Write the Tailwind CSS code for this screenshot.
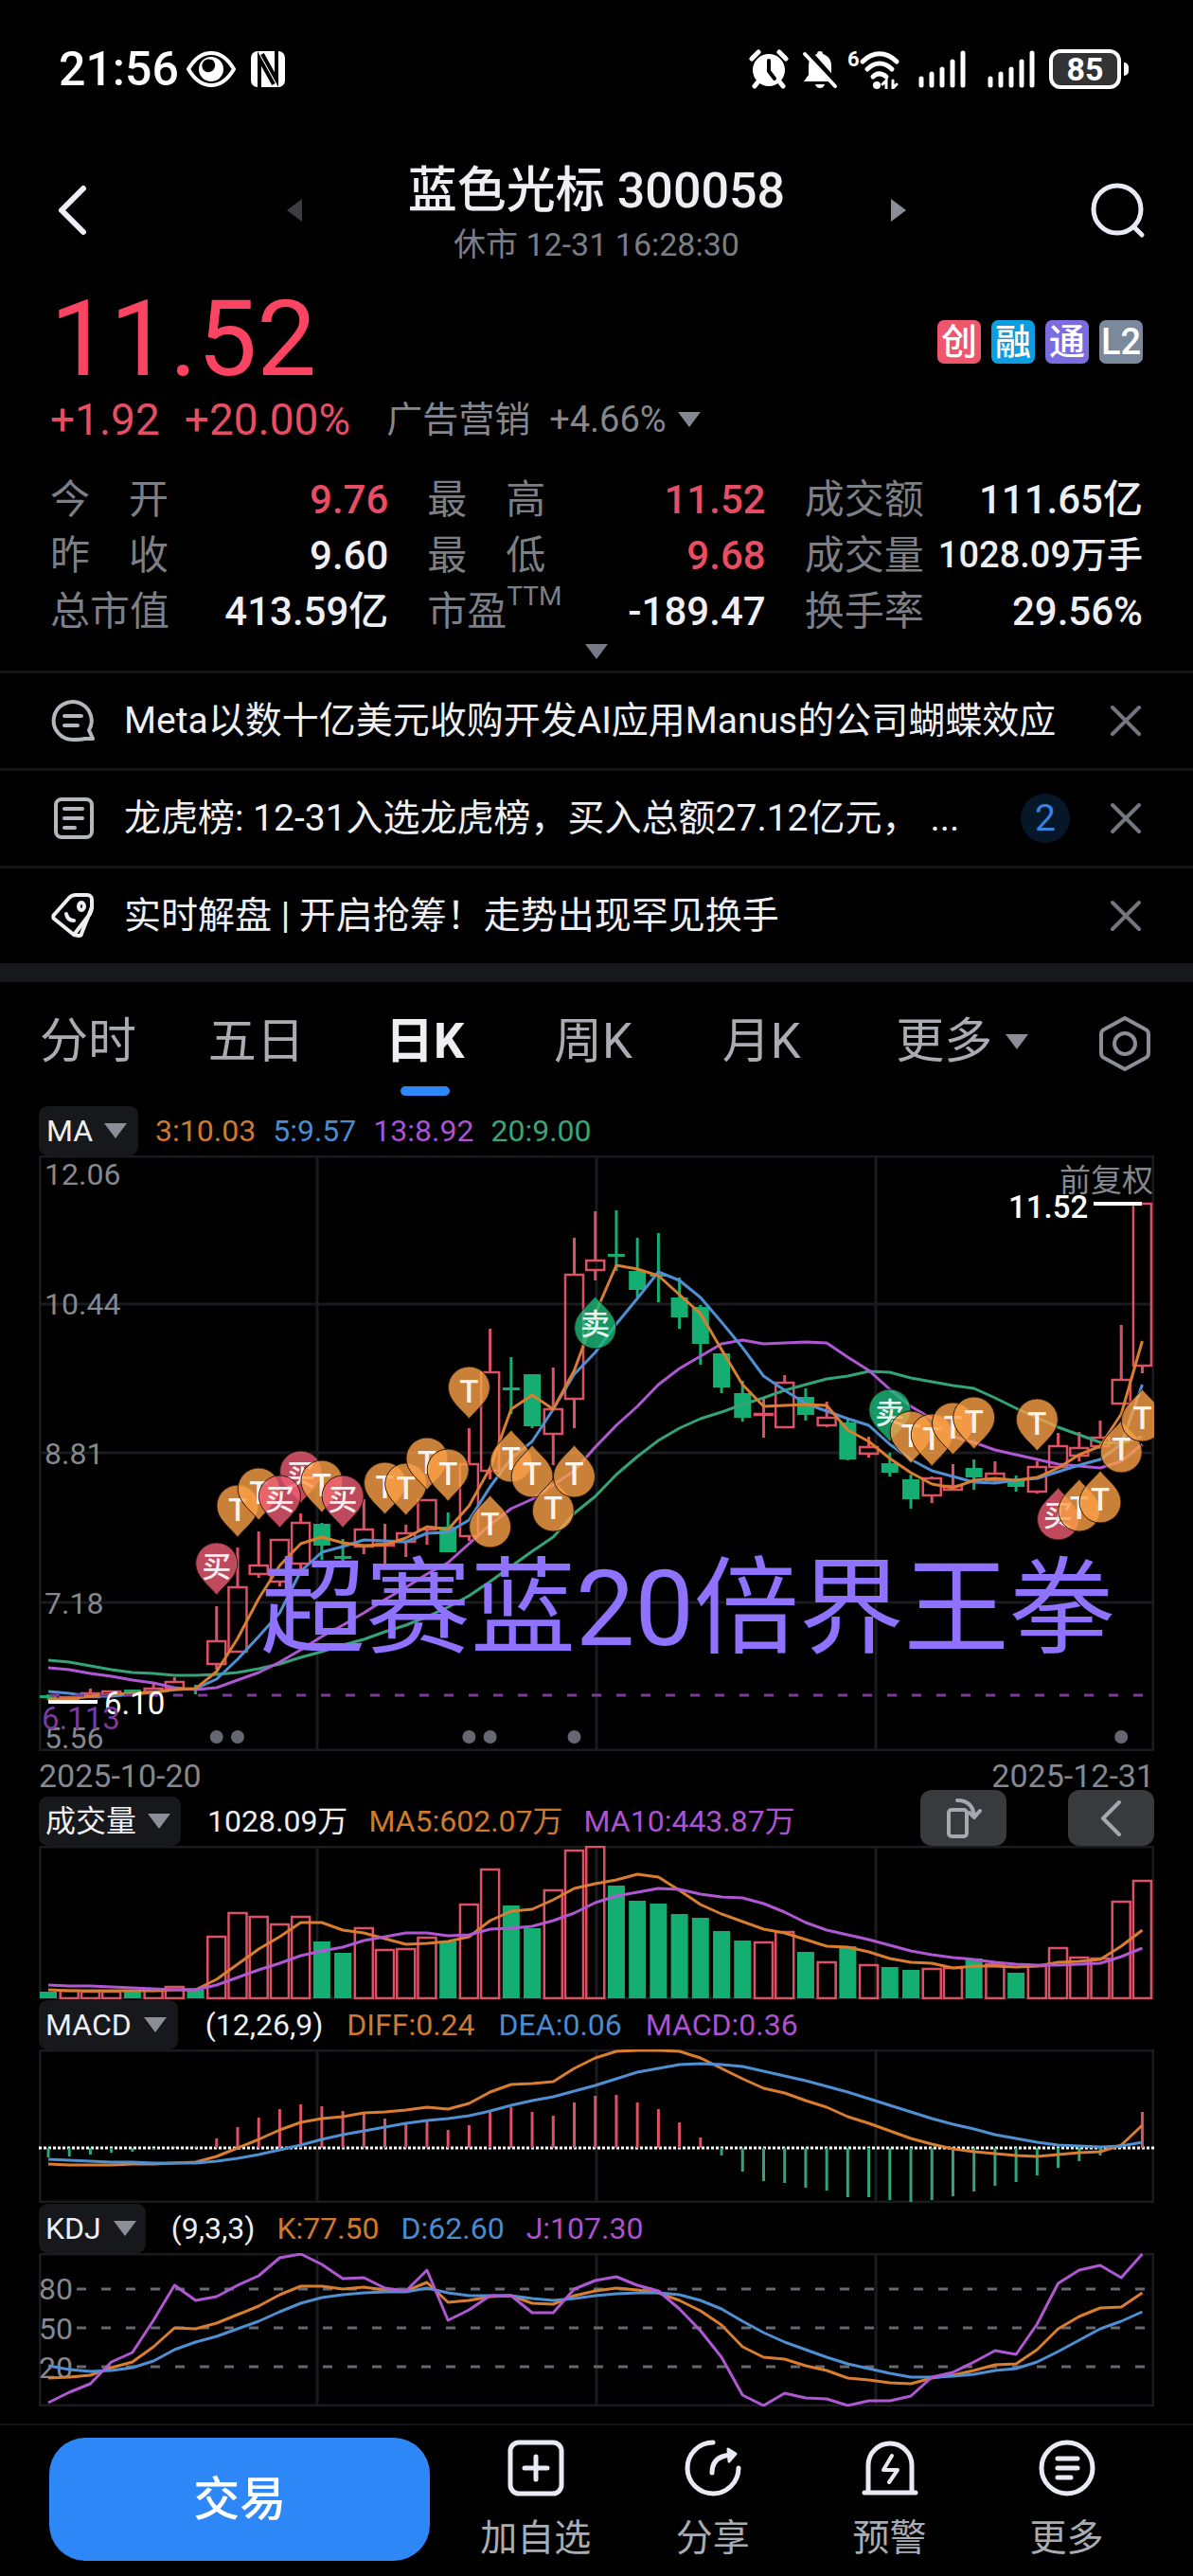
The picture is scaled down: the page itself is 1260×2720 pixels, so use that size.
<!DOCTYPE html>
<html lang="zh-CN">
<head>
    <meta charset="UTF-8">
    <meta name="viewport" content="width=device-width, initial-scale=1.0">
    <title>蓝色光标 300058</title>
    <script src="https://cdn.jsdelivr.net/npm/@tailwindcss/browser@4"></script>
</head>
<body class="bg-black text-[#eeeff3] font-['Roboto','Noto_Sans_CJK_SC',sans-serif] leading-none">

    <!-- Status bar -->
    <div class="flex h-[146px] items-center justify-between pl-[62px] pr-[68px] text-white">
        <div class="flex items-center">
            <span class="text-[50px] font-medium">21:56</span>
            <svg class="ml-2 h-[38px] w-[52px]" viewBox="0 0 52 38" fill="none">
                <path d="M2 19C9 7 17 2 26 2s17 5 24 17c-7 12-15 17-24 17S9 31 2 19z" stroke="#fff" stroke-width="4"/>
                <circle cx="26" cy="19" r="13" fill="#fff"/>
                <path d="M26 9a7 7 0 0 0-7 12 7 7 0 0 0 8-12z" fill="#000"/>
            </svg>
            <svg class="ml-[16px] h-[38px] w-[36px]" viewBox="0 0 36 38">
                <rect width="36" height="38" rx="7" fill="#fff"/>
                <path d="M9 38V8l15 27M27 0v30L12 3" fill="none" stroke="#000" stroke-width="4"/>
            </svg>
        </div>
        <div class="flex items-center">
            <svg class="h-[42px] w-[42px]" viewBox="0 0 42 42" fill="none" stroke="#fff" stroke-linecap="round">
                <path d="M3 10l7-7M39 10l-7-7" stroke-width="5"/>
                <path d="M10 34l-4 5M32 34l4 5" stroke-width="5"/>
                <circle cx="21" cy="22" r="17" fill="#fff" stroke="none"/>
                <path d="M21 12v11l6 8" stroke="#000" stroke-width="4"/>
            </svg>
            <svg class="ml-[14px] h-[42px] w-[38px]" viewBox="0 0 38 42" fill="none">
                <path d="M19 2c-2 0-3 1-3 3-6 2-9 6-9 13v9l-5 7h34l-5-7v-9c0-7-3-11-9-13 0-2-1-3-3-3z" fill="#fff"/>
                <path d="M14 37h10c-1 3-3 4-5 4s-4-1-5-4z" fill="#fff"/>
                <path d="M5 2l31 35" stroke="#000" stroke-width="8"/>
                <path d="M3 5l32 34" stroke="#fff" stroke-width="4" stroke-linecap="round"/>
            </svg>
            <svg class="ml-[10px] h-[42px] w-[56px]" viewBox="0 0 56 42" fill="none" stroke="#fff" stroke-width="5" stroke-linecap="round">
                <path d="M16 13c11-11 25-11 36 0M21 21c8-8 18-8 26 0M27 29c4-4 9-4 14 0"/>
                <circle cx="31" cy="38" r="4" fill="#fff" stroke="none"/>
                <path d="M41 41v-8l-4 4M48 33v8l4-4" stroke-width="3"/>
                <text x="0" y="18" fill="#fff" stroke="none" font-size="22" font-weight="700">6</text>
            </svg>
            <svg class="ml-[18px] h-[42px] w-[52px]" viewBox="0 0 52 42" fill="none" stroke="#fff" stroke-width="5" stroke-linecap="round">
                <path d="M4 31v7M15 26v12M26 21v17M37 13v25M48 4v34"/>
            </svg>
            <svg class="ml-[21px] h-[42px] w-[52px]" viewBox="0 0 52 42" fill="none" stroke="#fff" stroke-width="5" stroke-linecap="round">
                <path d="M4 31v7M15 26v12M26 21v17M37 13v25M48 4v34"/>
            </svg>
            <div class="ml-[14px] flex h-[42px] w-[76px] items-center justify-center rounded-[12px] border-4 border-white bg-[#333335] text-[34px] font-bold">85</div>
            <div class="ml-[3px] h-[14px] w-[5px] rounded-r-full bg-white"></div>
        </div>
    </div>

    <!-- Title bar -->
    <header class="flex h-[151px] items-center justify-between pl-[58px] pr-[48px]">
        <button aria-label="返回" class="w-[52px]">
            <svg class="h-[56px] w-[36px]" viewBox="0 0 36 56" fill="none" stroke="#eeeff6" stroke-width="6" stroke-linecap="round" stroke-linejoin="round"><path d="M30 5L7 28l23 23"/></svg>
        </button>
        <div class="flex items-center gap-[110px]">
            <button aria-label="上一个"><svg class="h-[24px] w-[16px]" viewBox="0 0 16 24"><path d="M16 0v24L0 12z" fill="#3c3d41"/></svg></button>
            <div class="flex w-[402px] flex-col items-center gap-[8px] pt-[8px]">
                <h1 class="text-[52px] leading-[56px] font-medium whitespace-nowrap">蓝色光标 300058</h1>
                <p class="text-[34px] leading-[40px] text-[#7b7e86] whitespace-nowrap">休市 12-31 16:28:30</p>
            </div>
            <button aria-label="下一个"><svg class="h-[24px] w-[16px]" viewBox="0 0 16 24"><path d="M0 0v24l16-12z" fill="#8b8e98"/></svg></button>
        </div>
        <button aria-label="搜索">
            <svg class="h-[62px] w-[62px]" viewBox="0 0 62 62" fill="none" stroke="#e8ebf3" stroke-width="5" stroke-linecap="round"><circle cx="30" cy="30" r="25"/><path d="M48 49l8 8"/></svg>
        </button>
    </header>

    <!-- Quote -->
    <section class="px-[53px]">
        <div class="flex items-center justify-between pt-[5px]">
            <div class="text-[112px] leading-[112px] text-[#fa4462]">11.52</div>
            <div class="flex gap-[11px] pt-[6px] text-[38px] font-medium text-white">
                <span class="flex size-[46px] items-center justify-center rounded-[7px] bg-[#ee566c]">创</span>
                <span class="flex size-[46px] items-center justify-center rounded-[7px] bg-[#0c9ee0]">融</span>
                <span class="flex size-[46px] items-center justify-center rounded-[7px] bg-[#7b6ce0]">通</span>
                <span class="flex size-[46px] items-center justify-center rounded-[7px] bg-[#7a899c]">L2</span>
            </div>
        </div>
        <div class="flex h-[58px] items-center whitespace-nowrap">
            <span class="text-[46px] text-[#e84e63]">+1.92</span>
            <span class="ml-[26px] text-[46px] text-[#e84e63]">+20.00%</span>
            <button class="ml-[38px] flex items-center text-[38px] text-[#85888f]">
                <span>广告营销</span>
                <span class="ml-[20px]">+4.66%</span>
                <svg class="ml-[12px] h-[16px] w-[24px]" viewBox="0 0 24 16"><path d="M0 0h24L12 16z" fill="#85888f"/></svg>
            </button>
        </div>
        <dl class="mt-[26px] grid grid-cols-3 gap-x-[41px] text-[42px] leading-[59px] whitespace-nowrap">
            <div class="flex justify-between"><dt class="flex w-[125px] justify-between text-[#7c7f86]"><span>今</span><span>开</span></dt><dd class="font-medium text-[#e84e63]">9.76</dd></div>
            <div class="flex justify-between"><dt class="flex w-[125px] justify-between text-[#7c7f86]"><span>最</span><span>高</span></dt><dd class="font-medium text-[#e84e63]">11.52</dd></div>
            <div class="flex justify-between"><dt class="text-[#7c7f86]">成交额</dt><dd class="font-medium">111.65亿</dd></div>
            <div class="flex justify-between"><dt class="flex w-[125px] justify-between text-[#7c7f86]"><span>昨</span><span>收</span></dt><dd class="font-medium">9.60</dd></div>
            <div class="flex justify-between"><dt class="flex w-[125px] justify-between text-[#7c7f86]"><span>最</span><span>低</span></dt><dd class="font-medium text-[#e84e63]">9.68</dd></div>
            <div class="flex justify-between"><dt class="text-[#7c7f86]">成交量</dt><dd class="text-[38px] font-medium">1028.09万手</dd></div>
            <div class="flex justify-between"><dt class="text-[#7c7f86]">总市值</dt><dd class="font-medium">413.59亿</dd></div>
            <div class="flex justify-between"><dt class="flex text-[#7c7f86]">市盈<span class="text-[28px] leading-[28px]">TTM</span></dt><dd class="font-medium">-189.47</dd></div>
            <div class="flex justify-between"><dt class="text-[#7c7f86]">换手率</dt><dd class="font-medium">29.56%</dd></div>
        </dl>
        <button aria-label="展开" class="mx-auto flex h-[33px] items-start pt-[5px]">
            <svg class="h-[16px] w-[24px]" viewBox="0 0 24 16"><path d="M0 0h24L12 16z" fill="#777a85"/></svg>
        </button>
    </section>

    <!-- News -->
    <ul class="text-[39px]">
        <li class="flex h-[103px] items-center border-t-[3px] border-[#151618] pl-[53px] pr-[53px]">
            <svg class="h-[48px] w-[48px] shrink-0" viewBox="0 0 48 48" fill="none" stroke="#b3b7be" stroke-width="4" stroke-linecap="round" stroke-linejoin="round"><path d="M24 44a20 20 0 1 1 17-10l4 9h-9c-3 1-7 1-12 1z"/><path d="M15 19h18M15 29h14"/></svg>
            <a href="#" class="ml-[30px] grow truncate leading-[56px]">Meta以数十亿美元收购开发AI应用Manus的公司蝴蝶效应</a>
            <button aria-label="关闭"><svg class="h-[36px] w-[36px]" viewBox="0 0 36 36" stroke="#73767f" stroke-width="4" stroke-linecap="round"><path d="M4 4l28 28M32 4L4 32"/></svg></button>
        </li>
        <li class="flex h-[103px] items-center border-t-[3px] border-[#151618] pl-[53px] pr-[53px]">
            <svg class="h-[48px] w-[48px] shrink-0" viewBox="0 0 48 48" fill="none" stroke="#b3b7be" stroke-width="4" stroke-linecap="round"><rect x="6" y="4" width="38" height="40" rx="6"/><path d="M15 14h19M15 24h19M15 34h11"/></svg>
            <a href="#" class="ml-[30px] flex w-[886px] leading-[56px] whitespace-nowrap">龙虎榜: 12-31入选龙虎榜，买入总额27.12亿元，<span class="ml-[12px]">...</span></a>
            <span class="ml-[61px] flex size-[52px] shrink-0 items-center justify-center rounded-full bg-[#06172a] text-[#3a82e0]">2</span>
            <button aria-label="关闭" class="ml-auto"><svg class="h-[36px] w-[36px]" viewBox="0 0 36 36" stroke="#73767f" stroke-width="4" stroke-linecap="round"><path d="M4 4l28 28M32 4L4 32"/></svg></button>
        </li>
        <li class="flex h-[103px] items-center border-t-[3px] border-[#151618] pl-[53px] pr-[53px]">
            <svg class="h-[48px] w-[48px] shrink-0" viewBox="0 0 48 48" fill="none" stroke="#eeeff3" stroke-width="4" stroke-linecap="round" stroke-linejoin="round"><path d="M4 23L20 5c2-2 4-3 7-3h12c3 0 5 2 5 5v8c0 3-1 5-2 7L25 44 4 27c-1-1-1-3 0-4z"/><path d="M25 44l5 1c2 0 3-1 3-2l11-28"/><ellipse cx="33" cy="14" rx="3" ry="4"/><path d="M17 22c1 5 4 7 8 7"/></svg>
            <a href="#" class="ml-[30px] grow truncate leading-[56px]">实时解盘 | 开启抢筹！走势出现罕见换手</a>
            <button aria-label="关闭"><svg class="h-[36px] w-[36px]" viewBox="0 0 36 36" stroke="#73767f" stroke-width="4" stroke-linecap="round"><path d="M4 4l28 28M32 4L4 32"/></svg></button>
        </li>
    </ul>
    <div class="h-[20px] bg-[#17181b]"></div>

    <!-- Period tabs -->
    <nav class="grid h-[130px] grid-cols-[repeat(5,178fr)_246fr_97fr] pl-[4px] pr-[24px] pt-[32px] text-[51px] leading-[62px] text-[#a9acb2]">
        <button class="self-start">分时</button>
        <button class="self-start">五日</button>
        <button class="flex flex-col items-center gap-[16px] self-start font-bold text-[#eeeff3]">日K<span class="h-[10px] w-[52px] rounded-[5px] bg-[#2e87f6]"></span></button>
        <button class="self-start">周K</button>
        <button class="self-start">月K</button>
        <button class="flex items-center justify-center gap-[14px] self-start">更多<svg class="h-[16px] w-[24px]" viewBox="0 0 24 16"><path d="M0 0h24L12 16z" fill="#8b8e96"/></svg></button>
        <button aria-label="设置" class="flex h-[66px] items-center justify-center self-start">
            <svg class="h-[60px] w-[56px]" viewBox="0 0 56 60" fill="none" stroke="#8b8e96" stroke-width="4" stroke-linejoin="round"><path d="M28 3l22 12c2 1 3 3 3 5v20c0 2-1 4-3 5L28 57 6 45c-2-1-3-3-3-5V20c0-2 1-4 3-5z"/><circle cx="28" cy="30" r="11"/></svg>
        </button>
    </nav>

    <main class="px-[41px] text-[32px] whitespace-nowrap">
        <!-- K line -->
        <div class="flex h-[53px] items-center gap-[18px]">
            <button class="flex h-[52px] items-center gap-[12px] rounded-[9px] bg-[#17181b] px-[8px] pr-[12px]">MA<svg class="h-[16px] w-[24px]" viewBox="0 0 24 16"><path d="M0 0h24L12 16z" fill="#8b8e96"/></svg></button>
            <span class="text-[#d07a30]">3:10.03</span>
            <span class="text-[#4a8ccf]">5:9.57</span>
            <span class="text-[#ad52d0]">13:8.92</span>
            <span class="text-[#3aa577]">20:9.00</span>
        </div>
        <svg id="kline" class="block w-full" viewBox="0 0 1178 629" fill="none">
            <path d="M1 1H1177V628H1V1M0 157H1178M0 314H1178M0 472H1178M294 0V629M589 0V629M884 0V629" stroke="#1a1b1e" stroke-width="3"/>
            <g id="candles"></g>
            <g id="klineLines" stroke-width="3" stroke-linejoin="round"></g>
            <path d="M12 570H1178" stroke="#7b3a9c" stroke-width="3" stroke-dasharray="10 16"/>
            <path d="M10 577H62M1114 51H1165" stroke="#fff" stroke-width="4"/>
            <text x="69" y="590" fill="#fff" font-size="33">6.10</text>
            <text x="1024" y="66" fill="#fff" font-size="33" font-weight="500">11.52</text>
            <text x="1078" y="38" fill="#85888f" font-size="33">前复权</text>
            <g fill="#85888f" font-size="32">
                <text x="6" y="31">12.06</text>
                <text x="6" y="168">10.44</text>
                <text x="6" y="326">8.81</text>
                <text x="6" y="484">7.18</text>
                <text x="6" y="626">5.56</text>
            </g>
            <text x="3" y="606" fill="#7b3a9c" font-size="33">6.113</text>
            <g id="dots" fill="#656873"></g>
            <g id="pins" font-size="31" font-weight="500" text-anchor="middle"></g>
            <text x="234" y="517" fill="#8f72ff" font-size="111">超赛蓝20倍界王拳</text>
        </svg>
        <div class="flex h-[47px] items-center justify-between pt-[4px] text-[34px] text-[#85888f]">
            <span>2025-10-20</span>
            <span>2025-12-31</span>
        </div>

        <!-- Volume -->
        <div class="flex h-[53px] items-end">
            <div class="flex grow items-center gap-[22px]">
                <button class="flex h-[52px] items-center gap-[12px] rounded-[9px] bg-[#17181b] pl-[7px] pr-[11px]">成交量<svg class="h-[16px] w-[24px]" viewBox="0 0 24 16"><path d="M0 0h24L12 16z" fill="#8b8e96"/></svg></button>
                <span class="ml-[6px]">1028.09万</span>
                <span class="text-[#d07a30]">MA5:602.07万</span>
                <span class="text-[#ad52d0]">MA10:443.87万</span>
            </div>
            <button aria-label="横屏" class="flex h-[59px] w-[91px] items-center justify-center rounded-[12px] bg-[#393a3d]">
                <svg class="h-[44px] w-[38px]" viewBox="0 0 38 44" fill="none" stroke="#a5a8ae" stroke-width="4" stroke-linecap="round" stroke-linejoin="round"><rect x="3" y="13" width="19" height="28" rx="3"/><path d="M12 3c10 0 17 5 18 17M25 16l5 5 6-7"/></svg>
            </button>
            <button aria-label="收起" class="ml-[65px] flex h-[59px] w-[91px] items-center justify-center rounded-[12px] bg-[#393a3d]">
                <svg class="h-[40px] w-[24px]" viewBox="0 0 24 40" fill="none" stroke="#a5a8ae" stroke-width="4" stroke-linecap="round" stroke-linejoin="round"><path d="M20 3L3 20l17 17"/></svg>
            </button>
        </div>
        <svg class="block w-full" viewBox="0 0 1178 162" fill="none">
            <path d="M1 1H1177V161H1V1M294 0V162M589 0V162M884 0V162" stroke="#1a1b1e" stroke-width="3"/>
            <g id="volume"></g>
            <g id="volumeLines" stroke-width="3" stroke-linejoin="round"></g>
        </svg>

        <!-- MACD -->
        <div class="flex h-[53px] items-center gap-[25px]">
            <button class="flex h-[52px] items-center gap-[13px] rounded-[9px] bg-[#17181b] pl-[7px] pr-[12px]">MACD<svg class="h-[16px] w-[24px]" viewBox="0 0 24 16"><path d="M0 0h24L12 16z" fill="#8b8e96"/></svg></button>
            <span class="ml-[4px]">(12,26,9)</span>
            <span class="text-[#d07a30]">DIFF:0.24</span>
            <span class="text-[#4a8ccf]">DEA:0.06</span>
            <span class="text-[#ad52d0]">MACD:0.36</span>
        </div>
        <svg class="block w-full" viewBox="0 0 1178 162" fill="none">
            <path d="M1 1H1177V161H1V1M294 0V162M589 0V162M884 0V162" stroke="#1a1b1e" stroke-width="3"/>
            <path d="M0 104H1178" stroke="#fff" stroke-width="3" stroke-dasharray="3 2"/>
            <g id="macd" stroke-width="3"></g>
            <g id="macdLines" stroke-width="3" stroke-linejoin="round"></g>
        </svg>

        <!-- KDJ -->
        <div class="flex h-[53px] items-center gap-[23px]">
            <button class="flex h-[52px] items-center gap-[13px] rounded-[9px] bg-[#17181b] pl-[7px] pr-[10px]">KDJ<svg class="h-[16px] w-[24px]" viewBox="0 0 24 16"><path d="M0 0h24L12 16z" fill="#8b8e96"/></svg></button>
            <span class="ml-[4px]">(9,3,3)</span>
            <span class="text-[#d07a30]">K:77.50</span>
            <span class="text-[#4a8ccf]">D:62.60</span>
            <span class="text-[#ad52d0]">J:107.30</span>
        </div>
        <svg class="block w-full" viewBox="0 0 1178 162" fill="none">
            <path d="M1 1H1177V161H1V1M294 0V162M589 0V162M884 0V162" stroke="#1a1b1e" stroke-width="3"/>
            <path d="M40 38H1170M40 79H1170M40 120H1170" stroke="#66696f" stroke-width="3" stroke-dasharray="10 16"/>
            <g fill="#85888f" font-size="32"><text x="0" y="49">80</text><text x="0" y="91">50</text><text x="0" y="132">20</text></g>
            <g id="kdjLines" stroke-width="3" stroke-linejoin="round"></g>
        </svg>
    </main>

    <!-- Bottom bar -->
    <footer class="mt-[18px] flex border-t-2 border-[#151618] pl-[52px] pr-[40px] pt-[13px] pb-[14px]">
        <button class="h-[130px] grow-[402] basis-0 rounded-[38px] bg-[#2e87f6] text-[49px] font-medium text-white">交易</button>
        <div class="ml-[18px] grid grow-[747] basis-0 grid-cols-4 text-[39px] leading-[48px] text-[#a9acb2]">
            <button class="flex flex-col items-center gap-[20px] pt-[2px]">
                <svg class="size-[60px]" viewBox="0 0 60 60" fill="none" stroke="#e8ebf3" stroke-width="5" stroke-linecap="round"><rect x="3" y="3" width="54" height="54" rx="9"/><path d="M30 18v24M18 30h24"/></svg>
                加自选
            </button>
            <button class="flex flex-col items-center gap-[20px] pt-[2px]">
                <svg class="size-[60px]" viewBox="0 0 60 60" fill="none" stroke="#e8ebf3" stroke-width="5" stroke-linecap="round" stroke-linejoin="round"><path d="M30 3a27 27 0 1 0 27 27"/><path d="M29 35c0-12 7-18 20-19"/><path d="M46 10l8 5-7 8z" fill="#e8ebf3" stroke-width="3"/></svg>
                分享
            </button>
            <button class="flex flex-col items-center gap-[20px] pt-[2px]">
                <svg class="size-[60px]" viewBox="0 0 60 60" fill="none" stroke="#e8ebf3" stroke-width="5" stroke-linecap="round" stroke-linejoin="round"><path d="M7 55V27a23 23 0 0 1 46 0v28M3 56h54"/><path d="M32 17l-9 15h15l-9 13" stroke-width="4"/></svg>
                预警
            </button>
            <button class="flex flex-col items-center gap-[20px] pt-[2px]">
                <svg class="size-[60px]" viewBox="0 0 60 60" fill="none" stroke="#e8ebf3" stroke-width="5" stroke-linecap="round"><circle cx="30" cy="30" r="27"/><path d="M20 20h21M20 30h21M20 40h14"/></svg>
                更多
            </button>
        </div>
    </footer>

    <script>
        const RED = '#dc5166', GREEN = '#14ae72';
        const ORANGE = '#d97d2f', BLUE = '#4f90d3', PURPLE = '#b057d3', TEAL = '#35a378';
        const x = i => 10 + i * 22.22;
        const put = (id, html) => document.getElementById(id).innerHTML = html;
        const line = (ys, color) => `<polyline stroke="${color}" points="${ys.map((y, i) => x(i) + ',' + y).join(' ')}"/>`;

        // direction, high, body top, body bottom, low
        const candles = [
            'g 569 570 573 575', 'r 572 572 575 575', 'r 563 568 572 573', 'r 566 566 570 570', 'g 564 564 567 567',
            'r 557 563 566 567', 'r 551 556 563 563', 'g 559 562 565 569', 'r 476 513 537 543', 'r 414 456 524 524',
            'r 397 433 442 446', 'r 405 406 450 455', 'r 378 388 431 437', 'g 388 389 412 427', 'g 405 423 426 431',
            'r 363 395 413 421', 'r 389 410 412 431', 'r 390 399 408 424', 'r 364 364 395 411', 'g 377 392 419 419',
            'r 288 326 402 407', 'r 183 229 333 342', 'g 213 245 248 273', 'g 231 231 286 288', 'r 224 268 294 327',
            'r 87 126 257 288', 'r 59 111 121 132', 'g 58 104 107 122', 'g 87 122 142 150', 'g 82 126 128 155',
            'g 129 150 171 183', 'g 158 160 199 221', 'g 209 209 245 251', 'g 238 251 277 281', 'r 257 273 274 298',
            'r 232 240 287 287', 'g 246 255 274 280', 'r 260 277 285 287', 'g 277 282 321 322', 'r 297 308 315 319',
            'g 314 325 335 339', 'g 337 342 363 373', 'r 339 341 359 367', 'r 326 349 353 353', 'g 321 330 340 353',
            'r 323 336 343 345', 'g 338 343 350 355', 'r 323 329 355 357', 'r 293 307 329 331', 'r 292 309 317 323',
            'r 280 298 307 310', 'r 179 237 262 262', 'r 51 51 222 230'
        ].map(s => s.split(' '));

        const bar = (i, dir, top, bottom) => dir === 'g'
            ? `<rect x="${x(i) - 9}" y="${top}" width="18" height="${bottom - top}" fill="${GREEN}"/>`
            : `<rect x="${x(i) - 9.5}" y="${top}" width="19" height="${bottom - top}" stroke="${RED}" stroke-width="2.5"/>`;

        put('candles', candles.map(([dir, high, top, bottom, low], i) =>
            `<path d="M${x(i)} ${high}V${top}M${x(i)} ${bottom}V${low}" stroke="${dir === 'g' ? GREEN : RED}" stroke-width="3"/>` + bar(i, dir, +top, +bottom)
        ).join(''));

        put('klineLines',
            line([533,535,539,543,546,547,549,549,548,546,542,537,530,524,517,511,503,496,487,477,465,450,434,418,403,378,360,337,318,301,288,278,271,263,256,248,242,236,233,228,229,235,239,243,246,256,267,277,287,295,303,304,297], TEAL) +
            line([541,543,547,550,554,557,562,564,562,554,546,535,522,508,496,483,469,456,442,430,410,390,373,363,348,333,308,285,265,242,225,212,199,195,199,198,197,198,213,227,247,265,278,297,303,311,316,321,326,328,330,323,305], PURPLE) +
            line([566,568,571,571,569,567,564,563,553,532,508,483,439,419,413,406,407,408,399,398,385,350,320,302,268,231,208,178,151,123,132,150,176,203,233,248,262,270,278,285,305,321,333,339,345,346,343,341,334,327,321,305,242], BLUE) +
            line([574,574,571,569,568,567,564,563,545,510,468,433,410,403,409,412,411,404,392,395,370,330,268,253,268,227,167,116,120,127,147,167,205,242,265,264,263,264,290,302,320,335,347,351,343,341,343,340,330,316,307,273,196], ORANGE));

        put('dots', [8, 9, 20, 21, 25, 51].map(i => `<circle cx="${x(i)}" cy="614" r="7"/>`).join(''));

        // column, tip y, +1 when the tip points down, label
        const pins = [
            [8, 464, 1, '买'], [9, 403, 1, 'T'], [10, 385, 1, 'T'], [12, 367, 1, '买'], [11, 393, 1, '买'], [13, 377, 1, 'T'],
            [14, 393, 1, '买'], [16, 379, 1, 'T'], [17, 380, 1, 'T'], [18, 353, 1, 'T'], [19, 365, 1, 'T'], [20, 278, 1, 'T'],
            [21, 359, -1, 'T'], [22, 290, -1, 'T'], [23, 306, -1, 'T'], [24, 342, -1, 'T'], [25, 306, -1, 'T'], [26, 149, -1, '卖'],
            [40, 302, 1, '卖'], [41, 325, 1, 'T'], [42, 328, 1, 'T'], [43, 316, 1, 'T'], [44, 310, 1, 'T'], [47, 312, 1, 'T'],
            [48, 351, -1, '买'], [49, 342, -1, 'T'], [50, 333, -1, 'T'], [51, 280, -1, 'T'], [52, 247, -1, 'T']
        ];
        const pinColor = { 'T': '#fba046', '买': '#f05c74', '卖': '#1bba7c' };
        put('pins', pins.map(([i, tip, dir, label]) => `<g transform="translate(${x(i)} ${tip})">
            <path transform="scale(1 ${dir})" d="M0 0C-8 -10 -22 -19 -22 -33A22 22 0 0 1 22 -33C22 -19 8 -10 0 0Z" fill="${pinColor[label]}" fill-opacity=".8" stroke="#2a1a0c" stroke-width="1"/>
            <text y="${(dir > 0 ? -28 : 31) + (label === 'T' ? 11 : 9)}" font-size="${label === 'T' ? 33 : 31}" fill="#fff" fill-opacity=".93">${label}</text></g>`).join(''));

        const volume = [154,153,154,154,154,153,149,152,96,71,75,83,75,101,113,87,110,109,97,101,62,25,63,87,47,5,1,42,58,61,72,76,90,100,102,91,112,123,106,126,128,131,130,129,119,125,134,127,108,118,119,59,37];
        put('volume', volume.map((y, i) => bar(i, candles[i][0], y, 161)).join(''));
        put('volumeLines',
            line([152,153,153,153,153,153,152,152,141,125,109,96,81,81,89,92,98,104,103,101,96,79,69,67,57,45,40,36,30,33,47,62,72,80,88,92,99,106,107,112,119,123,124,129,127,127,128,127,123,122,120,106,89], ORANGE) +
            line([147,148,148,149,150,151,152,152,147,139,131,124,116,111,107,100,96,92,92,95,94,88,87,85,79,71,60,53,49,45,46,51,54,55,61,70,81,89,94,99,105,111,115,118,120,123,125,126,126,125,124,117,108], PURPLE));

        const macd = [114,113,111,109,108,106,103,103,94,82,72,63,58,60,65,67,73,79,75,85,80,65,61,66,70,56,49,48,56,63,77,93,112,129,139,141,146,149,156,156,159,161,159,155,150,144,140,133,125,118,112,103,66];
        put('macd', macd.map((y, i) => `<path d="M${x(i)} 104V${y}" stroke="${y > 104 ? TEAL : RED}"/>`).join(''));
        put('macdLines',
            line([121,122,122,122,121,121,120,119,113,104,95,85,77,73,71,67,66,64,61,63,57,45,37,36,34,20,9,2,1,1,2,9,20,31,41,46,54,61,71,78,86,94,100,105,108,110,112,113,111,109,108,101,80], ORANGE) +
            line([116,117,118,119,119,120,120,120,118,115,111,106,101,95,90,86,82,78,75,73,70,65,59,54,50,44,38,31,24,20,16,15,16,18,23,28,33,39,45,52,59,66,73,79,84,90,94,98,101,102,103,102,98], BLUE));

        put('kdjLines',
            line([132,131,129,121,115,99,79,80,74,65,56,44,35,35,38,36,39,40,31,52,50,46,45,53,54,45,40,37,39,42,50,61,76,99,110,112,119,124,132,134,137,138,132,129,124,118,117,102,80,67,58,57,42], ORANGE) +
            line([119,123,125,124,121,114,102,94,88,80,72,62,53,47,44,42,41,41,37,42,45,45,45,48,50,48,45,43,42,42,44,50,59,72,84,94,102,110,117,122,127,131,131,130,128,124,122,115,104,92,80,72,62], BLUE) +
            line([158,147,138,115,105,71,34,50,46,34,24,5,1,12,27,26,37,40,18,71,60,45,45,63,63,38,29,25,34,40,59,82,110,150,161,148,153,154,161,156,156,151,131,126,115,103,107,75,32,18,13,26,1], PURPLE));
    </script>
</body>
</html>
